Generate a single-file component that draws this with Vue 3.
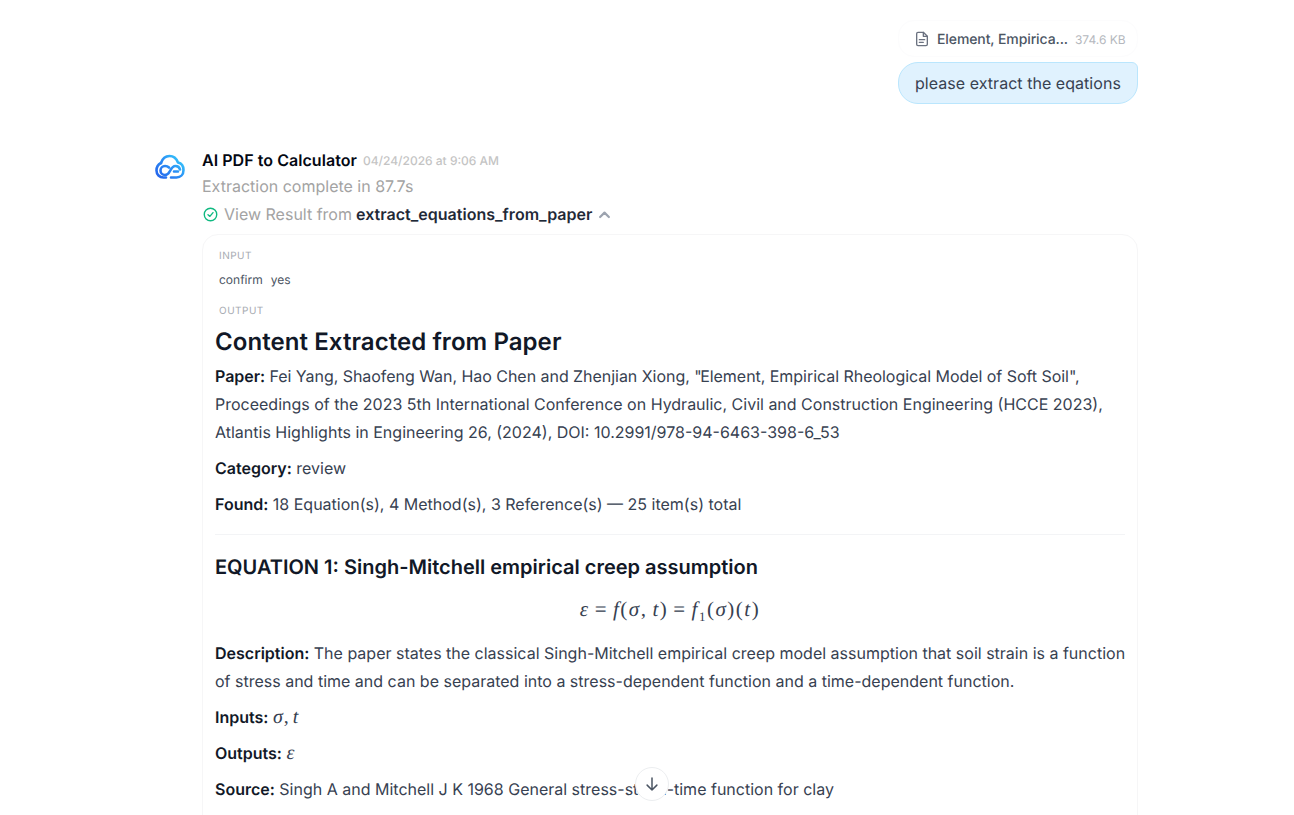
<template>
  <div class="page">
    <div class="thread">
      <section class="user-turn">
        <div class="file-chip">
          <svg class="file-icon" viewBox="0 0 24 24" fill="none" stroke="currentColor" stroke-width="2" stroke-linecap="round" stroke-linejoin="round">
            <path d="M14 2H6a2 2 0 0 0-2 2v16a2 2 0 0 0 2 2h12a2 2 0 0 0 2-2V8z" />
            <path d="M14 2v6h6" />
            <path d="M8 13h8M8 17h6" />
          </svg>
          <span class="file-name">Element, Empirica...</span>
          <span class="file-size">374.6 KB</span>
        </div>
        <div class="bubble">please extract the eqations</div>
      </section>

      <section class="bot-turn">
        <svg class="avatar" viewBox="0 0 30 26" fill="none" stroke-width="2.600" stroke-linecap="round" stroke-linejoin="round">
          <defs>
            <linearGradient id="logoGrad" gradientUnits="userSpaceOnUse" x1="3" y1="24" x2="24" y2="2">
              <stop offset="0" stop-color="#2563eb" />
              <stop offset="0.55" stop-color="#2b8ff5" />
              <stop offset="1" stop-color="#35c8fb" />
            </linearGradient>
          </defs>
          <path stroke="url(#logoGrad)" d="M6 9C7.500 4.500 10.500 2 14.500 2c4 0 7 2.500 8.500 6.500 3.500.8 5.500 4 5.500 7.500 0 4.500-3 7.500-7 7.500H16" />
          <path stroke="url(#logoGrad)" d="M6 9C3 10.500 1.500 13.500 1.500 16.500c0 4 3 7 7 7H11" />
          <path stroke="url(#logoGrad)" d="M14 13.500C13 12.500 11.500 12 10 12 7.500 12 5.500 14 5.500 16.500S7.500 21 10 21c2.500 0 4-2 5-4s2.500-5 5.500-5c2.500 0 4 1.500 4.500 3.500M19 17.500h4" />
        </svg>
        <div class="bot-body">
          <div class="bot-head">
            <span class="bot-name">AI PDF to Calculator</span>
            <span class="bot-time">04/24/2026 at 9:06 AM</span>
          </div>
          <div class="status">Extraction complete in 87.7s</div>
          <div class="tool-row">
            <svg class="check" viewBox="0 0 24 24" fill="none" stroke="#10b981" stroke-width="2.200" stroke-linecap="round" stroke-linejoin="round">
              <circle cx="12" cy="12" r="10" />
              <path d="M8 12.500l3 2.500 5-6" />
            </svg>
            <span class="tool-label">View Result from</span>
            <span class="tool-name">extract_equations_from_paper</span>
            <svg class="chevron" viewBox="0 0 24 24" fill="none" stroke="#9ca3af" stroke-width="3.500" stroke-linecap="round" stroke-linejoin="round">
              <path d="M5 16l7-7 7 7" />
            </svg>
          </div>

          <div class="result-card">
            <div class="section-label">Input</div>
            <div class="input-row"><span>confirm</span><span>yes</span></div>
            <div class="section-label output-label">Output</div>

            <div class="markdown">
              <h2>Content Extracted from Paper</h2>
              <p class="paper">
                <strong>Paper:</strong> Fei Yang, Shaofeng Wan, Hao Chen and Zhenjian Xiong, <span class="quote">"</span>Element, Empirical Rheological Model of Soft Soil<span class="quote">"</span>, Proceedings of the 2023 5th International Conference on Hydraulic, Civil and Construction Engineering (HCCE 2023), Atlantis Highlights in Engineering 26, (2024), DOI: 10.2991/978-94-6463-398-6_53
              </p>
              <p><strong>Category:</strong> review</p>
              <p><strong>Found:</strong> 18 Equation(s), 4 Method(s), 3 Reference(s) — 25 item(s) total</p>
              <hr />
              <h3>EQUATION 1: Singh-Mitchell empirical creep assumption</h3>
              <div class="math-block">
                <i>ε</i><span class="op">=</span><i>f</i>(<i>σ</i>,<i class="after-comma">t</i>)<span class="op">=</span><i>f</i><sub>1</sub>(<i>σ</i>)(<i>t</i>)
              </div>
              <p class="description">
                <strong>Description:</strong> The paper states the classical Singh-Mitchell empirical creep model assumption that soil strain is a function of stress and time and can be separated into a stress-dependent function and a time-dependent function.
              </p>
              <p><strong>Inputs:</strong> <span class="math"><i>σ</i>,<i class="after-comma inline">t</i></span></p>
              <p><strong>Outputs:</strong> <span class="math"><i>ε</i></span></p>
              <p><strong>Source:</strong> Singh A and Mitchell J K 1968 General stress-strain-time function for clay</p>
            </div>
          </div>
        </div>
      </section>
    </div>

    <button class="scroll-down" type="button" aria-label="Scroll to bottom">
      <svg viewBox="0 0 24 24" fill="none" stroke="#4b5563" stroke-width="2" stroke-linecap="round" stroke-linejoin="round">
        <path d="M12 4v16M5.500 13.500L12 20l6.500-6.500" />
      </svg>
    </button>
  </div>
</template>

<script setup>
</script>

<style>
html,
body {
  margin: 0;
  background: #fff;
  overflow: hidden;
}
</style>

<style scoped>
.page {
  position: relative;
  height: 815px;
  overflow: hidden;
  background: #fff;
  font-family: Inter, "Liberation Sans", sans-serif;
  color: #374151;
  text-rendering: geometricPrecision;
}

.thread {
  width: 983px;
  margin-left: 155px;
  padding-top: 20px;
}

.user-turn {
  display: flex;
  flex-direction: column;
  align-items: flex-end;
}

.file-chip {
  display: flex;
  align-items: center;
  width: 240px;
  height: 37px;
  box-sizing: border-box;
  padding: 1px 0 0 15px;
  border: 1px solid #fcfcfd;
  border-radius: 16px;
}

.file-icon {
  width: 16px;
  height: 16px;
  color: #6b7280;
  flex: none;
}

.file-name {
  margin-left: 7px;
  font-size: 14px;
  font-weight: 500;
  letter-spacing: -0.1px;
  color: #4b5563;
}

.file-size {
  margin-left: 7px;
  font-size: 12px;
  color: #b5b8be;
}

.bubble {
  margin-top: 5px;
  width: 240px;
  height: 42px;
  box-sizing: border-box;
  padding: 0 16px;
  line-height: 40px;
  font-size: 16px;
  letter-spacing: 0.04px;
  color: #374151;
  white-space: nowrap;
  background: #e0f2fe;
  border: 1px solid #bae6fd;
  border-radius: 20px 6px 20px 20px;
}

.bot-turn {
  display: flex;
  margin-top: 46px;
}

.avatar {
  width: 30px;
  height: 26px;
  flex: none;
  margin-top: 4px;
}

.bot-body {
  width: 936px;
  margin-left: 17px;
}

.bot-head {
  display: flex;
  align-items: center;
  height: 20px;
}

.bot-name {
  font-size: 16px;
  font-weight: 600;
  letter-spacing: 0.05px;
  color: #030712;
}

.bot-time {
  margin-left: 6px;
  font-size: 12px;
  font-weight: 500;
  color: #c4c4c4;
}

.status {
  margin-top: 5px;
  font-size: 16px;
  line-height: 22px;
  color: #a3a3a3;
}

.tool-row {
  display: flex;
  align-items: center;
  height: 24px;
  margin-top: 5px;
  padding-left: 1px;
  font-size: 16px;
}

.check {
  width: 15px;
  height: 15px;
  flex: none;
}

.tool-label {
  margin-left: 6px;
  color: #a3a3a3;
}

.tool-name {
  margin-left: 4px;
  font-weight: 600;
  letter-spacing: 0.03px;
  color: #1f2937;
}

.chevron {
  width: 15px;
  height: 15px;
  margin-left: 5px;
}

.result-card {
  margin-top: 8px;
  box-sizing: border-box;
  height: 640px;
  padding: 14px 12px 0;
  border: 1px solid #f6f6f7;
  border-radius: 16px;
}

.section-label {
  padding-left: 4px;
  font-size: 10px;
  line-height: 14px;
  letter-spacing: 0.5px;
  text-transform: uppercase;
  color: #a7abb2;
}

.input-row {
  display: flex;
  gap: 8px;
  margin-top: 9px;
  padding-left: 4px;
  font-size: 12px;
  line-height: 16px;
  color: #4b5563;
}

.output-label {
  margin-top: 16px;
}

.markdown {
  margin-top: 8px;
  font-size: 16px;
  line-height: 28px;
  color: #374151;
}

.markdown h2 {
  margin: 0 0 4px;
  font-size: 24px;
  line-height: 32px;
  font-weight: 600;
  letter-spacing: 0.07px;
  color: #111827;
}

.markdown h3 {
  margin: 0;
  font-size: 20px;
  line-height: 28px;
  font-weight: 600;
  color: #111827;
}

.markdown p {
  margin: 0 0 8px;
}

.markdown strong {
  font-weight: 600;
  color: #111827;
}

.markdown .description {
  margin-right: -6px;
}

.paper::first-line {
  letter-spacing: -0.04px;
}

.quote {
  letter-spacing: -1.5px;
}

.markdown hr {
  height: 1px;
  margin: 16px 0 18px;
  border: 0;
  background: #f3f4f6;
}

.math-block {
  height: 28px;
  margin: 14px 0 16px;
  text-align: center;
  font-family: "Liberation Serif", serif;
  font-size: 21px;
  line-height: 28px;
  letter-spacing: 1.5px;
  color: #374151;
}

.math-block sub {
  font-size: 13px;
  line-height: 0;
}

.op {
  margin: 0 5px;
}

.after-comma {
  margin-left: 5px;
}

.after-comma.inline {
  margin-left: 3px;
}

.math {
  font-family: "Liberation Serif", serif;
  font-size: 20px;
  letter-spacing: 1px;
}

.scroll-down {
  position: absolute;
  left: 635px;
  top: 767px;
  display: flex;
  align-items: center;
  justify-content: center;
  width: 34px;
  height: 34px;
  padding: 0;
  background: #fff;
  border: 1px solid #eceef0;
  border-radius: 50%;
}

.scroll-down svg {
  width: 18px;
  height: 18px;
}
</style>
